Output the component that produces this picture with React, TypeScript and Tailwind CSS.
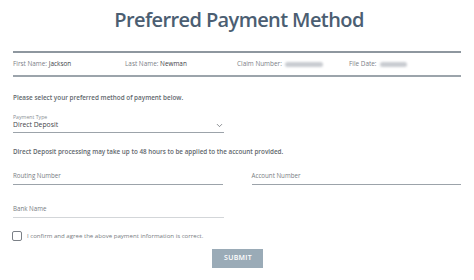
import { ChevronDown } from "lucide-react";

const font = { fontFamily: '"Open Sans", "Noto Sans", sans-serif' };

function Blur({ w }: { w: number }) {
  return (
    <span
      className="inline-block h-[5px] align-middle bg-[#c9ccd1] blur-[1px] rounded-sm ml-[2px]"
      style={{ width: w }}
    />
  );
}

export default function App() {
  return (
    <div className="w-[474px] h-[280px] bg-white overflow-hidden font-['Open_Sans',sans-serif] text-[#5a5f66]">
      <h1 className="text-center text-[20px] leading-[28px] font-semibold text-[#4b5e72] pt-[6px] pl-[4px] tracking-[-0.6px]">
        Preferred Payment Method
      </h1>

      <div className="mx-[13px] mt-[17px]">
        <div className="border-t-2 border-[#8e979f]" />
        <div className="grid grid-cols-4 h-[22px] items-center text-[6.4px] text-[#7b8087]">
          <div>
            First Name: <span className="text-[#3e4248]">Jackson</span>
          </div>
          <div>
            Last Name: <span className="text-[#3e4248]">Newman</span>
          </div>
          <div>
            Claim Number: <Blur w={38} />
          </div>
          <div>
            File Date: <Blur w={27} />
          </div>
        </div>
        <div className="border-t-2 border-[#9ca4ab]" />

        <p className="mt-[16px] text-[6.35px] font-semibold text-[#62676d]">
          Please select your preferred method of payment below.
        </p>

        <div className="w-[211px] mt-[11px]">
          <div className="text-[5.2px] leading-[7px] text-[#8a8f95]">Payment Type</div>
          <div className="flex items-center justify-between border-b border-[#9ca3aa] h-[12px] pb-[1px]">
            <span className="text-[6.8px] text-[#3f444a]">Direct Deposit</span>
            <ChevronDown className="w-[9px] h-[9px] text-[#555a60] mr-0" strokeWidth={1.8} />
          </div>
        </div>

        <p className="mt-[14px] text-[6.3px] font-semibold text-[#62676d]">
          Direct Deposit processing may take up to 48 hours to be applied to the account provided.
        </p>

        <div className="grid grid-cols-2 gap-x-[29px] mt-[15px]">
          <div className="border-b border-[#9ca3aa] h-[14px] text-[6.2px] text-[#777c82]">Routing Number</div>
          <div className="border-b border-[#9ca3aa] h-[14px] text-[6.2px] text-[#777c82]">Account Number</div>
        </div>

        <div className="w-[211px] mt-[19px] border-b border-[#d3d6d9] h-[14px] text-[6.2px] text-[#777c82]">
          Bank Name
        </div>

        <label className="flex items-center gap-[5px] mt-[13px] -ml-[1px] text-[6.1px] text-[#777c82]">
          <span className="w-[10px] h-[10px] border border-[#7b8087] rounded-[2px] bg-white" />
          I confirm and agree the above payment information is correct.
        </label>
      </div>

      <div className="flex justify-center mt-[8px]">
        <button
          className="w-[51px] h-[19px] bg-[#9aabb7] text-white text-[7px] font-semibold tracking-[0.3px] pl-[2px]"
          style={font}
        >
          SUBMIT
        </button>
      </div>
    </div>
  );
}
